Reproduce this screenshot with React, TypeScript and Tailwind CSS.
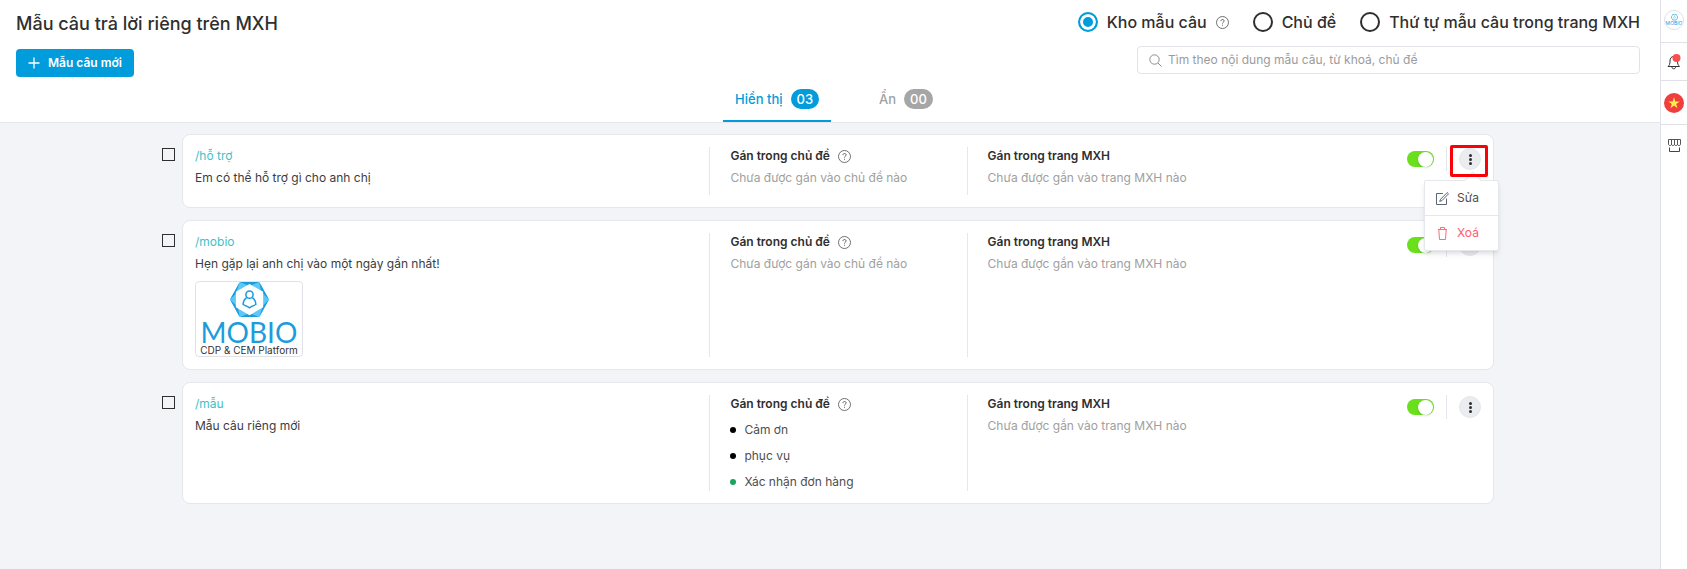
import React, { useState } from 'react';

type Topic = { name: string; color: string };
type Template = { key: string; content: string; hasImage?: boolean; topics: Topic[] };

const TEMPLATES: Template[] = [
  { key: '/hỗ trợ', content: 'Em có thể hỗ trợ gì cho anh chị', topics: [] },
  { key: '/mobio', content: 'Hẹn gặp lại anh chị vào một ngày gần nhất!', hasImage: true, topics: [] },
  {
    key: '/mẫu',
    content: 'Mẫu câu riêng mới',
    topics: [
      { name: 'Cảm ơn', color: '#000000' },
      { name: 'phục vụ', color: '#000000' },
      { name: 'Xác nhận đơn hàng', color: '#18a463' },
    ],
  },
];

const HelpIcon = () => (
  <svg width="13" height="13" viewBox="0 0 13 13" fill="none" stroke="#4e4e4e" className="shrink-0">
    <circle cx="6.5" cy="6.5" r="6" strokeWidth="0.8" />
    <path d="M4.9 5.1c0-1 .7-1.6 1.6-1.6s1.6.6 1.6 1.5c0 1.1-1.6 1.2-1.6 2.5" strokeWidth="0.9" />
    <path d="M6.5 8.7v1" strokeWidth="0.9" />
  </svg>
);

const MobioMark = ({ size }: { size: number }) => (
  <svg width={size} height={(size * 36) / 40} viewBox="0 0 40 36" fill="none" className="shrink-0">
    <path d="M10 0h20l10 18-10 18H10L0 18z" fill="#5cc8f5" />
    <path d="M10 0h20l-10 4zM40 18 30 0l2 10zM40 18 30 36l4-12zM0 18 10 0 6 12zM10 36h20l-10-4zM0 18l10 18-2-10z" fill="#1b9cdb" />
    <path d="M20 2l14 8v16l-14 8-14-8V10z" fill="#fff" />
    <circle cx="20" cy="13" r="3.7" stroke="#1b9cdb" strokeWidth="1.6" />
    <path d="M17 16c-2 1.500-3.500 4-3.500 7 2 1.200 4.500 2.200 6.500 3.500 2-1.300 4.500-2.300 6.500-3.500 0-3-1.500-5.500-3.500-7" stroke="#1b9cdb" strokeWidth="1.6" strokeLinejoin="round" />
  </svg>
);

const EditIcon = () => (
  <svg width="13" height="13" viewBox="0 0 13 13" fill="none" stroke="#4a5568" strokeWidth="0.9">
    <path d="M7 1.500H.5v11h10V6.500" />
    <path d="M11.200.6l1.300 1.300-6.500 6.700-2.300.8.900-2.200z" />
  </svg>
);

const TrashIcon = () => (
  <svg width="13" height="13" viewBox="0 0 13 13" fill="none" stroke="#ff5c6c" strokeWidth="0.9">
    <path d="M2 2.500h9M4.500 2.500v-2h4v2M2.800 2.500l.7 10h6l.7-10" />
  </svg>
);

const BellIcon = () => (
  <svg width="14" height="16" viewBox="0 0 14 16" fill="none">
    <path d="M1 12.500c1.500-1.500 2-2.500 2-5.500s1.500-4.500 3.500-4.500S10.500 4 10.500 7s.5 4 2 5.500z" stroke="#333" />
    <path d="M5 13c0 1.200.7 1.800 1.700 1.800S8.500 14.200 8.500 13" stroke="#333" />
    <circle cx="9.500" cy="4" r="4" fill="#ff4d4f" />
  </svg>
);

const StoreIcon = () => (
  <svg width="13" height="13" viewBox="0 0 13 13" fill="none" stroke="#444">
    <path d="M.5.5h12v4.500c0 1-.6 1.500-1.500 1.500S9.500 6 9.500 5c0 1-.6 1.500-1.500 1.500S6.500 6 6.500 5c0 1-.6 1.500-1.500 1.500S3.500 6 3.500 5c0 1-.6 1.500-1.500 1.500S.5 6 .5 5zM3.500.5V5M6.500.5V5M9.500.5V5" strokeWidth="0.9" />
    <path d="M1.500 8.500v4h10v-4" />
  </svg>
);

const ViewRadio: React.FC<{ label: string; checked: boolean; help?: boolean; onSelect: () => void }> = ({ label, checked, help, onSelect }) => (
  <label className="flex cursor-pointer items-center gap-[9px]">
    <input
      type="radio"
      name="view"
      checked={checked}
      onChange={onSelect}
      className="size-5 appearance-none rounded-full border-2 border-[#2f2f2f] bg-white checked:border-[#009cdb] checked:bg-[#009cdb] checked:shadow-[inset_0_0_0_3px_#fff]"
    />
    <span className="text-base leading-5 font-medium">{label}</span>
    {help && <HelpIcon />}
  </label>
);

const Tab: React.FC<{ label: string; count: string; active: boolean; onClick: () => void }> = ({ label, count, active, onClick }) => (
  <button
    role="tab"
    aria-selected={active}
    onClick={onClick}
    className={`flex h-[33px] items-start gap-2 border-b-2 px-3 text-[13px] leading-5 font-medium ${active ? 'border-[#009cdb] text-[#009cdb]' : 'border-transparent text-[#a2a2a2]'}`}
  >
    {label}
    <span className={`h-5 rounded-full px-1.5 text-white ${active ? 'bg-[#009cdb]' : 'bg-[#a6a6a6]'}`}>{count}</span>
  </button>
);

const ActionMenu = () => (
  <div role="menu" className="absolute top-8 -right-[18px] z-10 w-[75px] rounded-xs border border-[#e6e7ec] bg-white text-xs shadow-md">
    <span className="absolute -top-[7px] left-[42px] size-3 rotate-45 border-t border-l border-[#e6e7ec] bg-white" />
    <button role="menuitem" className="relative flex h-[35px] w-full items-center gap-2 border-b border-[#e6e7ec] pl-[11px] text-[#4e4e4e]">
      <EditIcon />
      Sửa
    </button>
    <button role="menuitem" className="flex h-[34px] w-full items-center gap-2 pl-[11px] text-[#ff5c6c]">
      <TrashIcon />
      Xoá
    </button>
  </div>
);

const TemplateRow: React.FC<{ item: Template; menuOpen: boolean; onMenu: () => void }> = ({ item, menuOpen, onMenu }) => {
  const [enabled, setEnabled] = useState(true);

  return (
    <li className="flex items-start gap-[7px]">
      <input
        type="checkbox"
        aria-label={`Chọn ${item.key}`}
        className="mt-[14px] size-[13px] shrink-0 appearance-none border border-[#2f2f2f] checked:bg-[#009cdb]"
      />
      <div className="grid min-w-0 flex-1 grid-cols-[2fr_1fr_2fr] rounded-lg border border-[#e6e7ec] bg-white p-3 text-xs leading-[18px]">
        <div className="min-h-12">
          <a href="#" className="block text-[#40bfc9]">{item.key}</a>
          <p className="mt-1 text-[#3c3c3c]">{item.content}</p>
          {item.hasImage && (
            <figure className="mt-2 flex h-[76px] w-[108px] flex-col items-center overflow-hidden rounded-sm border border-[#e0e2e8]">
              <MobioMark size={39} />
              <span className="mt-1 font-[Lato] text-[28px] leading-[22px] text-[#1b9cdb]">MOBIO</span>
              <figcaption className="text-[10px] leading-[15px] whitespace-nowrap text-[#333]">CDP &amp; CEM Platform</figcaption>
            </figure>
          )}
        </div>

        <div className="border-l border-[#e6e7ec] pl-5">
          <h3 className="flex items-center gap-2 font-semibold">
            Gán trong chủ đề
            <HelpIcon />
          </h3>
          {item.topics.length === 0 ? (
            <p className="mt-1 text-[#a0a0a0]">Chưa được gán vào chủ đề nào</p>
          ) : (
            <ul className="mt-2 space-y-2 text-[#4e4e4e]">
              {item.topics.map(topic => (
                <li key={topic.name} className="flex items-center gap-2">
                  <span className="size-1.5 rounded-full" style={{ backgroundColor: topic.color }} />
                  {topic.name}
                </li>
              ))}
            </ul>
          )}
        </div>

        <div className="flex items-start justify-between border-l border-[#e6e7ec] pl-5">
          <div>
            <h3 className="font-semibold">Gán trong trang MXH</h3>
            <p className="mt-1 text-[#a0a0a0]">Chưa được gắn vào trang MXH nào</p>
          </div>
          <div className="flex h-6 items-center">
            <button
              role="switch"
              aria-checked={enabled}
              aria-label="Hiển thị"
              onClick={() => setEnabled(!enabled)}
              className={`flex h-4 w-[27px] items-center rounded-full px-px ${enabled ? 'justify-end bg-[#6ae01d]' : 'bg-gray-300'}`}
            >
              <span className="size-[15px] rounded-full bg-white shadow" />
            </button>
            <div className="mx-3 h-6 w-px bg-[#e6e7ec]" />
            <div className="relative">
              <button
                aria-label="Tuỳ chọn"
                aria-haspopup="menu"
                onClick={onMenu}
                className="flex size-[22px] flex-col items-center justify-center gap-px rounded-full border border-[#e6e7ec] bg-[#ebecf0]"
              >
                <span className="size-[3px] rounded-full bg-[#2f2f2f]" />
                <span className="size-[3px] rounded-full bg-[#2f2f2f]" />
                <span className="size-[3px] rounded-full bg-[#2f2f2f]" />
              </button>
              {menuOpen && (
                <>
                  <span className="pointer-events-none absolute -top-[3px] -left-[9px] z-20 h-8 w-[38px] rounded-xs border-3 border-[#fb0007]" />
                  <ActionMenu />
                </>
              )}
            </div>
          </div>
        </div>
      </div>
    </li>
  );
};

const SideBar = () => (
  <aside className="flex w-[27px] shrink-0 flex-col border-l border-[#e0e1e8] bg-white">
    <button aria-label="Tài khoản" className="flex h-[43px] items-center justify-center border-b border-[#e0e1e8]">
      <span className="-mt-0.5 flex size-5 flex-col items-center justify-center overflow-hidden rounded-full border border-[#e0e1e8]">
        <MobioMark size={7} />
        <span className="text-[5px] leading-[5px] text-[#1b9cdb]">MOBIO</span>
      </span>
    </button>
    <button aria-label="Thông báo" className="flex h-[38px] items-center justify-center border-b border-[#e0e1e8]">
      <BellIcon />
    </button>
    <button aria-label="Tiếng Việt" className="flex h-11 items-center justify-center border-b border-[#e0e1e8]">
      <svg width="20" height="20" viewBox="0 0 20 20">
        <circle cx="10" cy="10" r="10" fill="#ee3e3e" />
        <path d="M10 4.300l1.350 4.150h4.350l-3.500 2.550 1.350 4.150L10 12.600l-3.550 2.550L7.800 11 4.300 8.450h4.350z" fill="#ffee4a" />
      </svg>
    </button>
    <button aria-label="Cửa hàng" className="flex h-[41px] items-center justify-center">
      <StoreIcon />
    </button>
  </aside>
);

export default function App() {
  const [view, setView] = useState(0);
  const [tab, setTab] = useState(0);
  const [openMenu, setOpenMenu] = useState<number | null>(0);
  const views = ['Kho mẫu câu', 'Chủ đề', 'Thứ tự mẫu câu trong trang MXH'];

  return (
    <div className="flex min-h-screen bg-[#f3f4f7] font-[Inter,sans-serif] text-[#2f2f2f]">
      <main className="min-w-0 flex-1">
        <header className="border-b border-[#e6e7ec] bg-white">
          <div className="flex items-start justify-between pr-5 pl-4">
            <div className="pt-3">
              <h1 className="text-lg leading-6 font-medium">Mẫu câu trả lời riêng trên MXH</h1>
              <button className="mt-[13px] flex h-7 items-center gap-2 rounded-sm bg-[#009cdb] px-3 text-xs font-semibold text-white">
                <svg width="12" height="12" viewBox="0 0 12 12" stroke="currentColor" strokeWidth="1.3">
                  <path d="M6 .5v11M.5 6h11" />
                </svg>
                Mẫu câu mới
              </button>
            </div>
            <div className="flex flex-col items-end pt-3">
              <div className="flex gap-6">
                {views.map((label, i) => (
                  <ViewRadio key={label} label={label} help={i === 0} checked={view === i} onSelect={() => setView(i)} />
                ))}
              </div>
              <label className="mt-[14px] flex h-7 w-[503px] items-center gap-1.5 rounded-sm border border-[#e2e3e9] px-[11px]">
                <svg width="13" height="13" viewBox="0 0 13 13" fill="none" stroke="#8c8c8c">
                  <circle cx="5.500" cy="5.500" r="4.700" />
                  <path d="M9 9l3.500 3.500" />
                </svg>
                <input
                  type="text"
                  aria-label="Tìm kiếm"
                  placeholder="Tìm theo nội dung mẫu câu, từ khoá, chủ đề"
                  className="min-w-0 flex-1 text-xs outline-none placeholder:text-[#9b9b9b]"
                />
              </label>
            </div>
          </div>
          <div role="tablist" className="mt-3 flex justify-center gap-9 pl-2">
            <Tab label="Hiển thị" count="03" active={tab === 0} onClick={() => setTab(0)} />
            <Tab label="Ẩn" count="00" active={tab === 1} onClick={() => setTab(1)} />
          </div>
        </header>

        <ul className="mx-auto max-w-[1336px] space-y-3 py-[11px] pr-1">
          {TEMPLATES.map((item, i) => (
            <TemplateRow
              key={item.key}
              item={item}
              menuOpen={openMenu === i}
              onMenu={() => setOpenMenu(openMenu === i ? null : i)}
            />
          ))}
        </ul>
      </main>
      <SideBar />
    </div>
  );
}
